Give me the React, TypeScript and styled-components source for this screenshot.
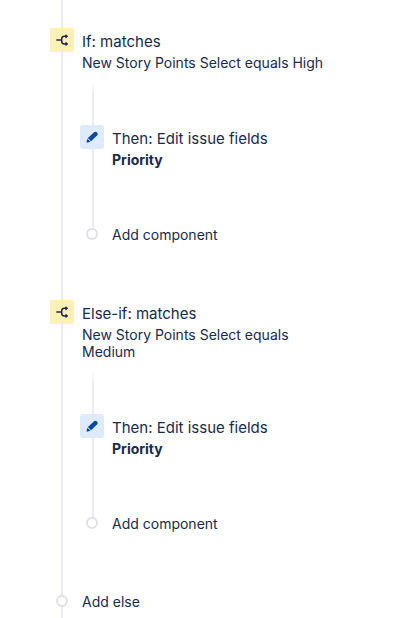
import React from "react";
import styled, { createGlobalStyle } from "styled-components";

const GlobalStyle = createGlobalStyle`
  * { box-sizing: border-box; }
  body {
    margin: 0;
    background: #ffffff;
    color: #172b4d;
    font-family: Inter, "Liberation Sans", sans-serif;
  }
`;

const LINE = "#ebebf0";

const Trunk = styled.main`
  min-height: 100vh;
  display: flex;
  flex-direction: column;
  gap: 54px;
  padding: 28px 84px 4px 50px;
  background: linear-gradient(${LINE}, ${LINE}) 61px 0 / 2px 100% no-repeat;
`;

const Condition = styled.section`
  display: flex;
  flex-direction: column;
  gap: 11px;
`;

const Branch = styled.div`
  display: flex;
  flex-direction: column;
  gap: 54px;
  margin-left: 30px;
  padding-top: 43px;
  background: linear-gradient(transparent, ${LINE} 14px) 12px 0 / 2px
    calc(100% - 14px) no-repeat;
`;

const Step = styled.div`
  display: flex;
  align-items: flex-start;
  gap: 8px;
`;

const Tile = styled.span<{ $tone: "yellow" | "blue" }>`
  flex: none;
  width: 24px;
  height: 24px;
  border-radius: 3px;
  background: ${(p) => (p.$tone === "yellow" ? "#fff0b3" : "#deebff")};
  color: ${(p) => (p.$tone === "yellow" ? "#172b4d" : "#0747a6")};

  svg {
    display: block;
  }
`;

const Title = styled.h2`
  margin: 0;
  padding-top: 2px;
  font-size: 15px;
  line-height: 24px;
  font-weight: 400;
`;

const Detail = styled.p<{ $strong?: boolean }>`
  margin: 0;
  font-size: 14px;
  line-height: 17px;
  font-weight: ${(p) => (p.$strong ? 700 : 400)};
`;

const AddButton = styled.button`
  display: flex;
  align-items: center;
  gap: 14px;
  height: 24px;
  padding: 0 0 0 6px;
  border: 0;
  background: none;
  color: inherit;
  font: inherit;
  font-size: 14px;
  line-height: 22px;
  cursor: pointer;
`;

const AddLabel = styled.span`
  padding-top: 2px;
`;

const Ring = styled.span`
  flex: none;
  width: 12px;
  height: 12px;
  border: 2px solid #dfe1e6;
  border-radius: 50%;
  background: #ffffff;
`;

const BranchIcon = () => (
  <svg width="24" height="24" viewBox="0 0 24 24" fill="none" aria-hidden="true">
    <path
      d="M6.3 12.1h5.2M16.5 8.3h-2.2q-2.6 0-2.6 2.6v2.4q0 2.6 2.6 2.6h2.2"
      stroke="currentColor"
      strokeWidth="1.5"
    />
    <path
      d="m15.8 6.7 2 1.6-2 1.6zM15.8 14.3l2 1.6-2 1.6z"
      fill="currentColor"
      stroke="currentColor"
      strokeWidth="0.8"
      strokeLinejoin="round"
    />
  </svg>
);

const PencilIcon = () => (
  <svg width="24" height="24" viewBox="0 0 24 24" fill="currentColor" aria-hidden="true">
    <path d="M14.1 7.2q1.4-1.2 2.9.2t.2 2.9l-6.1 6-3.2-3.2z" />
    <path d="m7.4 13.7 3.1 3.1-2.9.8q-1.3.2-1-1.1z" />
  </svg>
);

const AddStep = ({ children }: { children: React.ReactNode }) => (
  <AddButton type="button">
    <Ring />
    <AddLabel>{children}</AddLabel>
  </AddButton>
);

const conditions = [
  { title: "If: matches", detail: "New Story Points Select equals High" },
  { title: "Else-if: matches", detail: "New Story Points Select equals Medium" },
];

export default function App() {
  return (
    <>
      <GlobalStyle />
      <Trunk>
        {conditions.map((c) => (
          <Condition key={c.title}>
            <Step>
              <Tile $tone="yellow">
                <BranchIcon />
              </Tile>
              <div>
                <Title>{c.title}</Title>
                <Detail>{c.detail}</Detail>
              </div>
            </Step>
            <Branch>
              <Step>
                <Tile $tone="blue">
                  <PencilIcon />
                </Tile>
                <div>
                  <Title as="h3">Then: Edit issue fields</Title>
                  <Detail $strong>Priority</Detail>
                </div>
              </Step>
              <AddStep>Add component</AddStep>
            </Branch>
          </Condition>
        ))}
        <AddStep>Add else</AddStep>
      </Trunk>
    </>
  );
}
